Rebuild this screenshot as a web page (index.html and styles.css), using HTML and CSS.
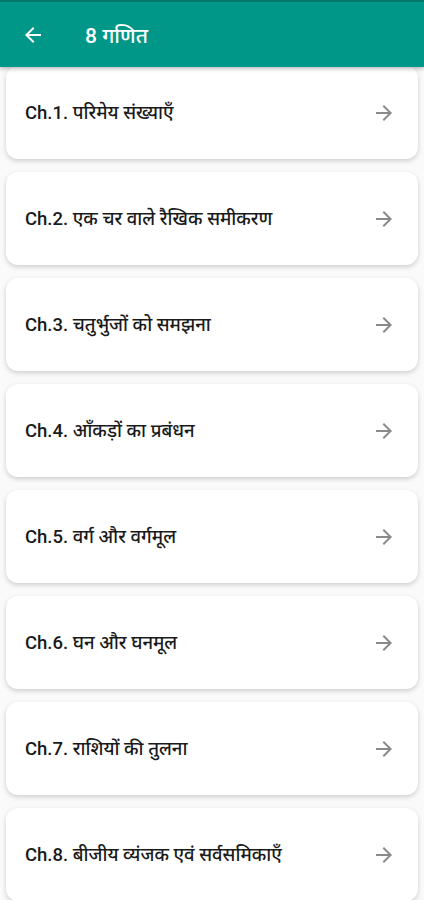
FILE: index.html
```html
<!DOCTYPE html>
<html lang="hi">
<head>
  <meta charset="UTF-8" />
  <meta name="viewport" content="width=device-width, initial-scale=1.0" />
  <title>8 गणित</title>
  <link rel="stylesheet" href="styles.css">
</head>
<body>

  <!-- Top bar -->
  <header class="appbar">
    <button class="back" aria-label="Back">
      <svg width="24" height="24" viewBox="0 0 24 24"><path d="M20 11H7.83l5.59-5.59L12 4l-8 8 8 8 1.41-1.41L7.83 13H20v-2z" fill="#fff"/></svg>
    </button>
    <h1>8 गणित</h1>
  </header>

  <!-- Chapter list -->
  <main class="chapters">
    <a class="chapter" href="#"><span>Ch.1. परिमेय संख्याएँ</span><svg class="go" viewBox="0 0 24 24"><path d="M12 4l-1.41 1.41L16.17 11H4v2h12.17l-5.58 5.59L12 20l8-8z"/></svg></a>
    <a class="chapter" href="#"><span>Ch.2. एक चर वाले रैखिक समीकरण</span><svg class="go" viewBox="0 0 24 24"><path d="M12 4l-1.41 1.41L16.17 11H4v2h12.17l-5.58 5.59L12 20l8-8z"/></svg></a>
    <a class="chapter" href="#"><span>Ch.3. चतुर्भुजों को समझना</span><svg class="go" viewBox="0 0 24 24"><path d="M12 4l-1.41 1.41L16.17 11H4v2h12.17l-5.58 5.59L12 20l8-8z"/></svg></a>
    <a class="chapter" href="#"><span>Ch.4. आँकड़ों का प्रबंधन</span><svg class="go" viewBox="0 0 24 24"><path d="M12 4l-1.41 1.41L16.17 11H4v2h12.17l-5.58 5.59L12 20l8-8z"/></svg></a>
    <a class="chapter" href="#"><span>Ch.5. वर्ग और वर्गमूल</span><svg class="go" viewBox="0 0 24 24"><path d="M12 4l-1.41 1.41L16.17 11H4v2h12.17l-5.58 5.59L12 20l8-8z"/></svg></a>
    <a class="chapter" href="#"><span>Ch.6. घन और घनमूल</span><svg class="go" viewBox="0 0 24 24"><path d="M12 4l-1.41 1.41L16.17 11H4v2h12.17l-5.58 5.59L12 20l8-8z"/></svg></a>
    <a class="chapter" href="#"><span>Ch.7. राशियों की तुलना</span><svg class="go" viewBox="0 0 24 24"><path d="M12 4l-1.41 1.41L16.17 11H4v2h12.17l-5.58 5.59L12 20l8-8z"/></svg></a>
    <a class="chapter" href="#"><span>Ch.8. बीजीय व्यंजक एवं सर्वसमिकाएँ</span><svg class="go" viewBox="0 0 24 24"><path d="M12 4l-1.41 1.41L16.17 11H4v2h12.17l-5.58 5.59L12 20l8-8z"/></svg></a>
  </main>

</body>
</html>
```

FILE: styles.css
```css
* {
  box-sizing: border-box;
}

body {
  margin: 0;
  padding: 0;
  font-family: Roboto, "Noto Sans", sans-serif;
  background: #fafafa;
  color: #212121;
  overflow: hidden;
}

.appbar {
  position: relative;
  z-index: 2;
  height: 67px;
  display: flex;
  align-items: center;
  padding: 0 0 0 20px;
  background: #009688;
  border-top: 2px solid #00796b;
  box-shadow: 0 2px 4px rgba(0, 0, 0, 0.25);
}

.back {
  background: none;
  border: none;
  padding: 0;
  width: 26px;
  height: 26px;
  display: flex;
  align-items: center;
  justify-content: center;
  cursor: pointer;
}

.appbar h1 {
  margin: 0 0 0 39px;
  font-size: 21px;
  font-weight: 500;
  color: #fff;
}

.chapters {
  display: flex;
  flex-direction: column;
  gap: 13px;
  padding: 0 6px;
  margin-top: -1px;
}

.chapter {
  height: 93px;
  display: flex;
  align-items: center;
  justify-content: space-between;
  padding: 0 22px 3px 19px;
  background: #fff;
  border-radius: 12px;
  box-shadow: 0 2px 5px rgba(0, 0, 0, 0.18);
  text-decoration: none;
  color: #1a1a1a;
  font-size: 18.5px;
  font-weight: 500;
}

.go {
  width: 24px;
  height: 24px;
  margin-top: 3px;
  fill: #8a8a8a;
  flex-shrink: 0;
}
```
